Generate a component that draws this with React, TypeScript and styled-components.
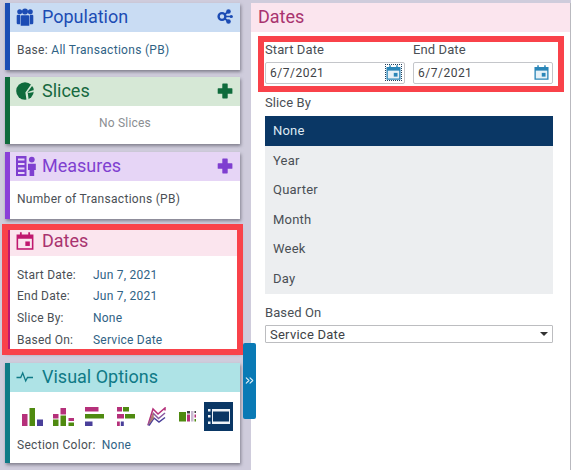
import { ChevronsRight } from 'lucide-react';
import { createGlobalStyle, styled } from 'styled-components';

const GlobalStyle = createGlobalStyle`
  html, body { margin: 0; padding: 0; }
  body {
    width: 571px;
    height: 470px;
    overflow: hidden;
    background: #cfccdc;
    font-family: Roboto, "Liberation Sans", sans-serif;
  }
`;

const Page = styled.div`
  position: relative;
  display: flex;
  width: 571px;
  height: 470px;
`;

const Sidebar = styled.div`
  display: flex;
  flex-direction: column;
  width: 251px;
  padding: 3px 0 0 5px;
  box-sizing: border-box;
`;

const Card = styled.section<{ $accent: string; $height: number; $gap: number; $outlined?: boolean }>`
  width: 235px;
  height: ${p => p.$height}px;
  margin-bottom: ${p => p.$gap}px;
  box-sizing: border-box;
  border-left: 5px solid ${p => p.$accent};
  background: #fff;
  box-shadow: 1px 2px 3px rgba(70, 70, 80, 0.55);
  outline: ${p => (p.$outlined ? '6px solid #f9424a' : 'none')};
  outline-offset: -3px;
`;

const CardHead = styled.header<{ $bg: string; $color: string }>`
  display: flex;
  align-items: center;
  height: 29px;
  padding: 0 7px 2px 6px;
  box-sizing: border-box;
  gap: 8px;
  background: ${p => p.$bg};
  color: ${p => p.$color};
  font-size: 18px;
  line-height: 27px;
`;

const IconSlot = styled.span`
  display: flex;
  width: 18px;
  height: 18px;
  flex: none;
  align-items: center;
  svg { flex: none; }
`;

const HeadAction = styled.span`
  display: flex;
  margin-left: auto;
`;

const CardBody = styled.div`
  padding: 10px 7px 0;
  font-size: 12px;
  line-height: 16px;
  color: #4a4f55;
  letter-spacing: 0.3px;
`;

const Value = styled.span`
  color: #2f6285;
`;

const Empty = styled.div`
  padding-top: 9px;
  text-align: center;
  font-size: 12px;
  line-height: 16px;
  color: #8b8e92;
  letter-spacing: 0.2px;
`;

const Summary = styled.dl`
  display: grid;
  grid-template-columns: 76px 1fr;
  grid-auto-rows: 21.6px;
  align-items: center;
  margin: 0;
  padding: 8px 7px 0;
  font-size: 12px;
  color: #4a4f55;
  letter-spacing: 0.23px;
  dt, dd { margin: 0; }
  dd { color: #2f6285; }
`;

const ChartRow = styled.div`
  display: flex;
  align-items: center;
  height: 29px;
  margin-top: 10px;
  padding-left: 9.5px;
  gap: 5px;
`;

const ChartButton = styled.span<{ $active?: boolean }>`
  display: flex;
  align-items: center;
  justify-content: center;
  flex: none;
  width: ${p => (p.$active ? 29 : 26)}px;
  height: ${p => (p.$active ? 29 : 26)}px;
  margin-left: ${p => (p.$active ? -1.5 : 0)}px;
  background: ${p => (p.$active ? '#0a3765' : 'transparent')};
`;

const SectionColor = styled.div`
  margin-top: 6px;
  padding-left: 7px;
  font-size: 12px;
  line-height: 16px;
  color: #4a4f55;
  letter-spacing: 0.3px;
  ${Value} { margin-left: 6px; }
`;

const Handle = styled.button`
  position: absolute;
  left: 243px;
  top: 343px;
  display: flex;
  align-items: center;
  justify-content: center;
  width: 13px;
  height: 76px;
  padding: 0 0 2px;
  box-sizing: border-box;
  border: 0;
  border-radius: 2px;
  background: #0a7ab5;
  color: #e4f1f8;
`;

const Panel = styled.main`
  width: 319px;
  height: 467px;
  margin-top: 3px;
  border-right: 1px solid #b9b9bf;
  background: #fff;
`;

const PanelTitle = styled.h1`
  height: 29px;
  margin: 0;
  padding-left: 7px;
  background: #fbe5ee;
  color: #a9336f;
  font-size: 18px;
  font-weight: 400;
  line-height: 27px;
`;

const PanelBody = styled.div`
  padding: 10px 18px 0 14px;
  color: #4a4f55;
  font-size: 13px;
`;

const DateFields = styled.div`
  display: grid;
  grid-template-columns: 140px 140px;
  column-gap: 8px;
  width: 294px;
  height: 44px;
  margin-left: -1px;
  padding-left: 1px;
  box-sizing: border-box;
  outline: 6px solid #f9424a;
`;

const Field = styled.label`
  display: block;
  font-size: 13px;
  line-height: 16px;
  letter-spacing: 0.1px;
`;

const DateBox = styled.span`
  display: flex;
  align-items: center;
  justify-content: space-between;
  height: 21.5px;
  margin-top: 4px;
  padding: 0 3px 0 4px;
  box-sizing: border-box;
  border: 1px solid #c4c6ca;
  border-radius: 2px;
  color: #3e4246;
  font-size: 12px;
  letter-spacing: 0.5px;
`;

const FocusedIcon = styled.span`
  display: flex;
  outline: 1px dotted #20405e;
`;

const Heading = styled.div<{ $top: number }>`
  margin-top: ${p => p.$top}px;
  font-size: 13px;
  line-height: 16px;
  letter-spacing: 0.1px;
`;

const SliceList = styled.ul`
  margin: 5px 0 0;
  padding: 0;
  list-style: none;
  background: #eceef0;
  width: 288px;
`;

const SliceItem = styled.li<{ $selected?: boolean }>`
  height: 29.6px;
  padding-left: 8px;
  background: ${p => (p.$selected ? '#0a3765' : 'transparent')};
  color: ${p => (p.$selected ? '#dfe9f2' : '#4a4f55')};
  font-size: 13px;
  line-height: 29.6px;
  letter-spacing: 0.2px;
`;

const SelectBox = styled.div`
  display: flex;
  align-items: center;
  justify-content: space-between;
  width: 288px;
  height: 18px;
  margin-top: 4px;
  padding: 1px 4px 0;
  box-sizing: border-box;
  border: 1px solid #bcbdc0;
  border-radius: 1px;
  color: #3e4246;
  font-size: 13px;
  letter-spacing: 0.25px;
`;

const Caret = styled.span`
  width: 0;
  height: 0;
  border-left: 4px solid transparent;
  border-right: 4px solid transparent;
  border-top: 4px solid #333;
`;

function PeopleIcon() {
  return (
    <svg width="18" height="18" viewBox="0 0 18 18" fill="#1c4cb4">
      <circle cx="9" cy="3.400" r="3" />
      <circle cx="3.700" cy="3.800" r="2.500" />
      <circle cx="14.300" cy="3.800" r="2.500" />
      <path d="M5.900 7.200h6.200a1.200 1.200 0 0 1 1.200 1.200V17.800H4.700V8.400a1.200 1.200 0 0 1 1.200-1.200z" />
      <path d="M1.500 6.800h2.700v9.500H1.900a1.200 1.200 0 0 1-1.200-1.200V7.600zM13.800 6.800h2.700l.8.800v7.500a1.200 1.200 0 0 1-1.200 1.200h-2.300z" />
    </svg>
  );
}

function NodesIcon() {
  return (
    <svg width="16" height="15" viewBox="0 0 16 15">
      <path d="M5 7.500 11.500 2.500M5 7.500l6.500 5M5 7.500h9" stroke="#1c4cb4" strokeWidth="1.600" />
      <circle cx="5" cy="7.500" r="3.400" fill="#c9dcf3" stroke="#1c4cb4" strokeWidth="2.400" />
      <circle cx="11.500" cy="2.500" r="2.300" fill="#1c4cb4" />
      <circle cx="11.500" cy="12.500" r="2.300" fill="#1c4cb4" />
      <circle cx="14.300" cy="7.500" r="1.600" fill="#1c4cb4" />
    </svg>
  );
}

function PieIcon() {
  return (
    <svg width="18" height="18" viewBox="0 0 18 18">
      <circle cx="9" cy="9" r="8.800" fill="#0f6b3c" />
      <path d="M10.500 18 9.400 10.600 15.500 1.800l1.300 1.300-5.200 7 1.100 7.600z" fill="#d6e8d6" />
      <path d="M12 10.100 17.900 8v2L12.600 11z" fill="#d6e8d6" />
    </svg>
  );
}

function PlusIcon({ color }: { color: string }) {
  return (
    <svg width="16" height="16" viewBox="0 0 16 16" fill={color}>
      <path d="M5.300 1.200a.6.6 0 0 1 .6-.6h4.200a.6.6 0 0 1 .6.6v4h4.100a.6.6 0 0 1 .6.6v4.400a.6.6 0 0 1-.6.6h-4.100v4a.6.6 0 0 1-.6.6H5.900a.6.6 0 0 1-.6-.6v-4h-4a.6.6 0 0 1-.6-.6V5.800a.6.6 0 0 1 .6-.6h4z" />
    </svg>
  );
}

function MeasuresIcon() {
  return (
    <svg width="20" height="20" viewBox="0 0 20 20" fill="#7f3fd0">
      <path d="M0 0h10.500v20H0zM2 2.500v2h6.500v-2zm0 4.500v2h6.500V7zm0 4.500v2h6.500v-2zm0 4.500v2h6.500v-2z" fillRule="evenodd" />
      <circle cx="15.800" cy="3.600" r="2.900" />
      <path d="M12 7.800h7.800v6.200h-1.600V20h-4.600v-6H12z" />
    </svg>
  );
}

function CalendarIcon({ color, size, cell }: { color: string; size: number; cell?: string }) {
  return (
    <svg width={size} height={size} viewBox="0 0 16 16">
      <path d="M.5 2.200h3V.3h1.600v1.900h5.800V.3h1.600v1.900h3v13.500H.5z" fill={color} />
      <rect x="1.900" y="6" width="12.200" height="8.400" fill={cell ?? '#fff'} />
      <rect x="8.300" y="8.400" width="4" height="4" fill={color} />
    </svg>
  );
}

function PulseIcon() {
  return (
    <svg width="18" height="18" viewBox="0 0 18 18" fill="none" stroke="#0f7a86" strokeWidth="1.300">
      <path d="M.5 9.500h4.200l2-4.500 3 8 1.800-3.500h5.500" />
    </svg>
  );
}

const M = '#b5307a';
const G = '#4f8a10';
const P = '#4a3f9a';

function ChartBars() {
  return (
    <svg width="21" height="18" viewBox="0 0 21 18">
      <rect x="0" y="6" width="5.500" height="12" fill={M} />
      <rect x="7.500" y="0" width="5.500" height="18" fill={G} />
      <rect x="15" y="11.500" width="6" height="6.500" fill={P} />
    </svg>
  );
}

function ChartStacked() {
  return (
    <svg width="21" height="18" viewBox="0 0 21 18">
      <rect x="0" y="6" width="5.500" height="4.500" fill={M} />
      <rect x="0" y="11.500" width="5.500" height="6.500" fill={G} />
      <rect x="7.500" y="0" width="5.500" height="6.500" fill={M} />
      <rect x="7.500" y="7.500" width="5.500" height="10.500" fill={G} />
      <rect x="15.500" y="10" width="5.500" height="3" fill={M} />
      <rect x="15.500" y="14.500" width="5.500" height="3.500" fill={G} />
    </svg>
  );
}

function ChartHorizontal() {
  return (
    <svg width="19" height="19" viewBox="0 0 19 19">
      <rect x="0" y="0" width="13.500" height="4.500" fill={M} />
      <rect x="0" y="7" width="19" height="4.500" fill={G} />
      <rect x="0" y="14.500" width="7.500" height="4.500" fill={P} />
    </svg>
  );
}

function ChartHorizontalStacked() {
  return (
    <svg width="18" height="19" viewBox="0 0 18 19">
      <rect x="0" y="0" width="5" height="4.500" fill={M} />
      <rect x="6" y="0" width="6" height="4.500" fill={G} />
      <rect x="0" y="7" width="7" height="4.500" fill={M} />
      <rect x="8" y="7" width="10" height="4.500" fill={G} />
      <rect x="0" y="14.500" width="2.800" height="4.500" fill={M} />
      <rect x="3.800" y="14.500" width="3" height="4.500" fill={P} />
    </svg>
  );
}

function ChartArea() {
  return (
    <svg width="19" height="19" viewBox="0 0 19 19" fill="none" strokeWidth="1.500">
      <path d="M1 18 6 2l5 5 7-6 0 2.500" stroke={M} />
      <path d="M1 18.500 6.500 6.500l5 5 6.500-5.500" stroke="#8a5aa0" />
      <path d="M2 18.500 7 11l5 4 6-4.500" stroke={P} />
      <path d="M1.500 18 6 5l1 6z" fill="#b07a70" stroke="none" />
    </svg>
  );
}

function ChartHeat() {
  return (
    <svg width="18" height="11" viewBox="0 0 18 11">
      <rect x="0" y="1" width="7" height="9.500" fill={G} />
      <rect x="8" y="0" width="3" height="2.500" fill="#444" />
      <rect x="8" y="3.500" width="3" height="7" fill={M} />
      <rect x="12" y="0" width="2.500" height="10.500" fill="#c8b8d0" />
      <rect x="15.500" y="0" width="1.500" height="2" fill="#444" />
      <rect x="15.500" y="3.500" width="1.500" height="3" fill={M} />
      <rect x="15.500" y="8" width="1.500" height="2.500" fill={G} />
    </svg>
  );
}

function ChartTable() {
  return (
    <svg width="22" height="15" viewBox="0 0 22 15" fill="#eef3f7">
      <rect x="0" y="0" width="2.500" height="2.500" />
      <rect x="0" y="6" width="2.500" height="2.500" />
      <rect x="0" y="12.500" width="2.500" height="2.500" />
      <rect x="4" y="0" width="18" height="2.500" />
      <rect x="4" y="12.500" width="18" height="2.500" />
      <rect x="4" y="0" width="1" height="15" />
      <rect x="21" y="0" width="1" height="15" />
    </svg>
  );
}

const sliceOptions = ['None', 'Year', 'Quarter', 'Month', 'Week', 'Day'];

export default function App() {
  return (
    <Page>
      <GlobalStyle />
      <Sidebar>
        <Card $accent="#1c4cb4" $height={67} $gap={7}>
          <CardHead $bg="#c9dcf3" $color="#1c4cb4">
            <IconSlot><PeopleIcon /></IconSlot>
            Population
            <HeadAction><NodesIcon /></HeadAction>
          </CardHead>
          <CardBody>
            Base: <Value>All Transactions (PB)</Value>
          </CardBody>
        </Card>

        <Card $accent="#0f6b3c" $height={67} $gap={8}>
          <CardHead $bg="#d6e8d6" $color="#17693f">
            <IconSlot><PieIcon /></IconSlot>
            Slices
            <HeadAction><PlusIcon color="#0f6b3c" /></HeadAction>
          </CardHead>
          <Empty>No Slices</Empty>
        </Card>

        <Card $accent="#8a3fd8" $height={67} $gap={8}>
          <CardHead $bg="#e6d5f6" $color="#7f3fd0">
            <IconSlot><MeasuresIcon /></IconSlot>
            Measures
            <HeadAction><PlusIcon color="#7f3fd0" /></HeadAction>
          </CardHead>
          <CardBody>Number of Transactions (PB)</CardBody>
        </Card>

        <Card $accent="#c0186f" $height={125} $gap={11} $outlined>
          <CardHead $bg="#fbe5ee" $color="#a9336f">
            <IconSlot><CalendarIcon color="#c0186f" size={18} cell="#fbe5ee" /></IconSlot>
            Dates
          </CardHead>
          <Summary>
            <dt>Start Date:</dt><dd>Jun 7, 2021</dd>
            <dt>End Date:</dt><dd>Jun 7, 2021</dd>
            <dt>Slice By:</dt><dd>None</dd>
            <dt>Based On:</dt><dd>Service Date</dd>
          </Summary>
        </Card>

        <Card $accent="#0f7a86" $height={100} $gap={0}>
          <CardHead $bg="#aee3e6" $color="#0f7a86">
            <IconSlot><PulseIcon /></IconSlot>
            Visual Options
          </CardHead>
          <ChartRow>
            <ChartButton><ChartBars /></ChartButton>
            <ChartButton><ChartStacked /></ChartButton>
            <ChartButton><ChartHorizontal /></ChartButton>
            <ChartButton><ChartHorizontalStacked /></ChartButton>
            <ChartButton><ChartArea /></ChartButton>
            <ChartButton><ChartHeat /></ChartButton>
            <ChartButton $active><ChartTable /></ChartButton>
          </ChartRow>
          <SectionColor>Section Color:<Value>None</Value></SectionColor>
        </Card>
      </Sidebar>

      <Panel>
        <PanelTitle>Dates</PanelTitle>
        <PanelBody>
          <DateFields>
            <Field>
              Start Date
              <DateBox>
                6/7/2021
                <FocusedIcon><CalendarIcon color="#2a86b8" size={15} cell="#e6f1f7" /></FocusedIcon>
              </DateBox>
            </Field>
            <Field>
              End Date
              <DateBox>
                6/7/2021
                <CalendarIcon color="#2a86b8" size={15} cell="#e6f1f7" />
              </DateBox>
            </Field>
          </DateFields>
          <Heading $top={9}>Slice By</Heading>
          <SliceList>
            {sliceOptions.map((option, i) => (
              <SliceItem key={option} $selected={i === 0}>{option}</SliceItem>
            ))}
          </SliceList>
          <Heading $top={11}>Based On</Heading>
          <SelectBox>
            Service Date
            <Caret />
          </SelectBox>
        </PanelBody>
      </Panel>

      <Handle aria-label="Collapse"><ChevronsRight size={13} strokeWidth={2} /></Handle>
    </Page>
  );
}
